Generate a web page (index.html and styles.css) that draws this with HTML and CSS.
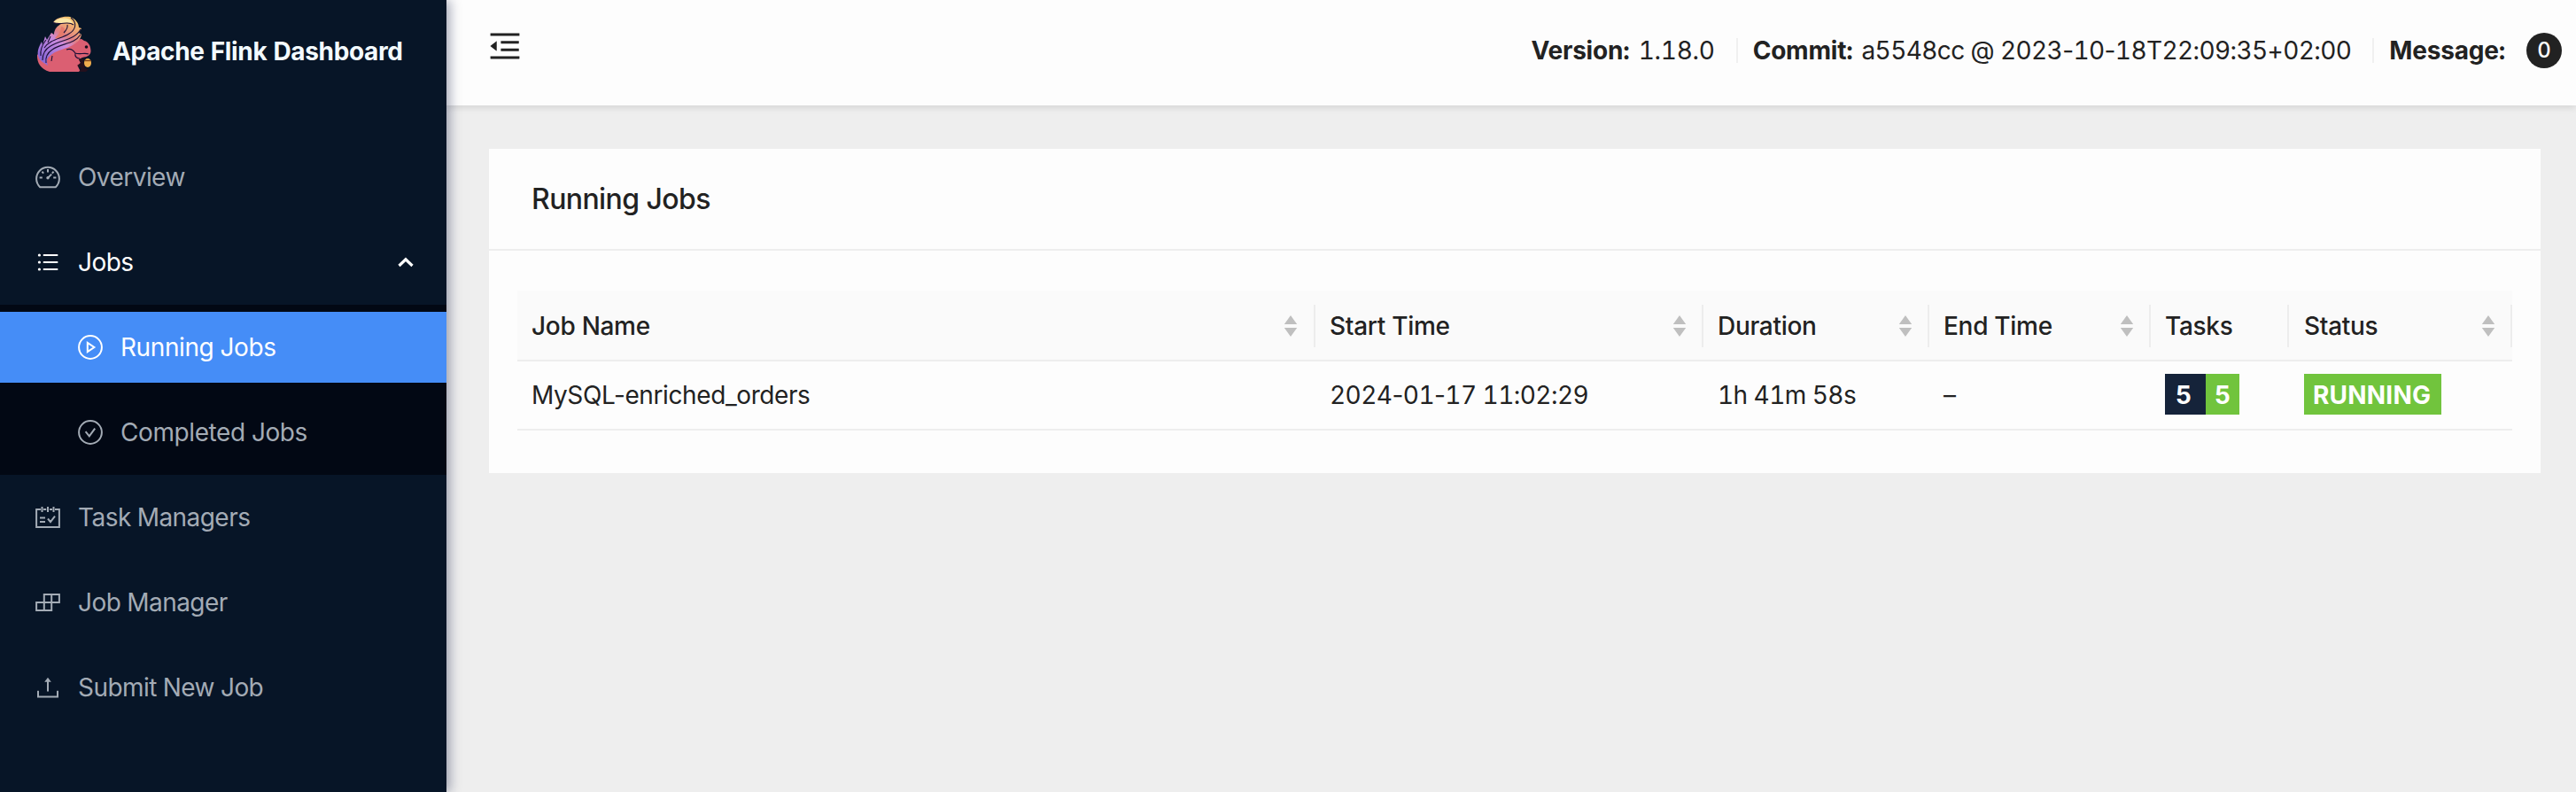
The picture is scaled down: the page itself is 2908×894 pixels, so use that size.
FILE: index.html
```html
<!DOCTYPE html>
<html lang="en">
<head>
<meta charset="utf-8">
<title>Apache Flink Web Dashboard</title>
<link rel="stylesheet" href="styles.css">
</head>
<body>
<div class="layout">
  <aside class="sider">
    <div class="brand">
      <svg class="logo" viewBox="0 0 64 66">
        <defs>
          <linearGradient id="tail" gradientUnits="userSpaceOnUse" x1="42" y1="2" x2="14" y2="50">
            <stop offset="0" stop-color="#f6cf6e"/>
            <stop offset="0.2" stop-color="#efa873"/>
            <stop offset="0.4" stop-color="#e07f84"/>
            <stop offset="0.58" stop-color="#c98ade"/>
            <stop offset="1" stop-color="#8d6ad8"/>
          </linearGradient>
        </defs>
        <path fill="#db5f72" d="M16 64C6 61 1.500 54 2 45L10 38L38 35C43 30 47 27 52 27L55 29C60 30 62.500 35 62.500 41C62 46 58 47 53 48L49 50L51 54L48 58L51 64Z"/>
        <path fill="url(#tail)" d="M8 53C2 49 1 42 5 34L7 30L8 34L11 24L13 28L18 20L21 22C21 16 25 12 29 10L20 8.500C23 3 32 1 39 2C45 4 49 9 49 14L52 15L49 20L52 22C51 28 47 31 42 34C36 38 25 39 19 44C13 48 12 51 14 57Z"/>
        <path fill="#fbe7a6" d="M20 8.500C24 3 33 2.500 39 5L43 10C37 7 28 11 20 8.500Z"/>
        <path fill="#e57a6c" d="M29 13C34 14 35 20 30 25C27 27 24 27 22 26C26 22 29 18 29 13Z"/>
        <g fill="none" stroke="#1d1036" stroke-width="1.100">
          <path d="M20 8.500C29 12 37 6 43 11M40 3C48 9 45 17 38 21C29 27 17 27 10 37"/>
          <path d="M51 16C45 28 28 28 17 35C10 39 8 44 8 51"/>
          <path d="M51 22C43 34 30 31 19 39C13 43 11 48 12 54"/>
          <path d="M12 28C8 33 5 38 6 46M17 24L14 31M36 11C37 15 34 18 32 20M19 46L18 52"/>
          <path d="M35 39C40 37 43 40 45 43C50 45 55 42 60 44M45 43C44 47 47 49 50 49"/>
        </g>
        <path fill="#24101d" d="M49 50L55 48L54 52L57 57L55 60L60 61L57 64L49 64L52 60L47 57L51 54Z"/>
        <circle cx="57.500" cy="36" r="1.800" fill="#1a0d1d"/>
        <ellipse cx="59" cy="54" rx="4" ry="5" fill="#efae4e"/>
        <path stroke="#7a3f1d" stroke-width="1.300" d="M55.300 51.500h7.400"/>
      </svg>
      <h1 class="brand-name">Apache Flink Dashboard</h1>
    </div>
    <nav class="menu">
      <a class="item">
        <svg class="icon" viewBox="0 0 28 28"><path class="line" d="M5.200 25.200A12.900 12.900 0 1 1 22.800 25.200Z"/><path class="line" d="M14 5v3.600M7.400 7.800l1.800 1.800M20.600 7.800l-1.800 1.800M4.600 14.500h3.200M20.200 14.500h3.200M14.200 14.600l4-4"/><circle class="dot" cx="14" cy="14.800" r="1.700"/></svg>
        <span>Overview</span>
      </a>
      <a class="item open">
        <svg class="icon" viewBox="0 0 28 28"><path class="line" d="M8.800 6h16.500M8.800 14h16.500M8.800 22h16.500"/><circle class="dot" cx="4.400" cy="6" r="1.600"/><circle class="dot" cx="4.400" cy="14" r="1.600"/><circle class="dot" cx="4.400" cy="22" r="1.600"/></svg>
        <span>Jobs</span>
        <svg class="arrow" viewBox="0 0 20 20"><path d="M2.500 14l7.500-7.200 7.500 7.200"/></svg>
      </a>
      <div class="submenu">
        <a class="item selected">
          <svg class="icon" viewBox="0 0 28 28"><circle class="line" cx="14" cy="14" r="12.900"/><path class="line" d="M10.800 8.800v10.400l7.600-5.200z"/></svg>
          <span>Running Jobs</span>
        </a>
        <a class="item">
          <svg class="icon" viewBox="0 0 28 28"><circle class="line" cx="14" cy="14" r="12.900"/><path class="line" d="M8.600 13.200l4.200 5.200 6.400-8.800"/></svg>
          <span>Completed Jobs</span>
        </a>
      </div>
      <a class="item">
        <svg class="icon" viewBox="0 0 28 28"><path class="line" d="M6 5H1.100v20h25.800V5H22M9 5h3.200M16 5h3M7.500 2v6M14 2v6M20.500 2v6M5 14.500h6M5 19h6M14 15.500l3 3.600 5-6.400"/></svg>
        <span>Task Managers</span>
      </a>
      <a class="item">
        <svg class="icon" viewBox="0 0 28 28"><path class="line" d="M9.800 5h17.100v9H9.800zM1.100 14h17.100v9H1.100zM18.200 5v9M9.800 14v9"/></svg>
        <span>Job Manager</span>
      </a>
      <a class="item">
        <svg class="icon" viewBox="0 0 28 28"><path class="line" d="M3 17.800v6.700h22v-6.700M14 18.500V5"/><path class="dot" d="M14 2.800l3.800 4.900h-7.600z"/></svg>
        <span>Submit New Job</span>
      </a>
    </nav>
  </aside>
  <div class="main">
    <header class="topbar">
      <svg class="fold" viewBox="0 0 1024 1024"><path d="M408 442h480c4.400 0 8-3.600 8-8v-56c0-4.400-3.600-8-8-8H408c-4.400 0-8 3.600-8 8v56c0 4.400 3.600 8 8 8zm-8 204c0 4.400 3.600 8 8 8h480c4.400 0 8-3.600 8-8v-56c0-4.400-3.600-8-8-8H408c-4.400 0-8 3.600-8 8v56zm504-486H120c-4.400 0-8 3.600-8 8v56c0 4.400 3.600 8 8 8h784c4.400 0 8-3.600 8-8v-56c0-4.400-3.600-8-8-8zm0 632H120c-4.400 0-8 3.600-8 8v56c0 4.400 3.600 8 8 8h784c4.400 0 8-3.600 8-8v-56c0-4.400-3.600-8-8-8zM115.400 518.900L271.700 642c5.800 4.600 14.400.5 14.400-6.900V388.900c0-7.400-8.500-11.500-14.400-6.900L115.400 505.100a8.740 8.740 0 000 13.800z"/></svg>
      <div class="info">
        <span class="pair"><strong>Version:</strong> 1.18.0</span>
        <i class="divider"></i>
        <span class="pair commit"><strong>Commit:</strong> a5548cc @ 2023<span class="dash">-</span>10<span class="dash">-</span>18T22:09:35+02:00</span>
        <i class="divider"></i>
        <strong class="message">Message:</strong>
        <span class="badge">0</span>
      </div>
    </header>
    <main class="content">
      <section class="card">
        <h2 class="card-head">Running Jobs</h2>
        <div class="card-body">
          <div class="row head">
            <div class="cell">Job Name<svg class="sorter" viewBox="0 0 16 26"><path d="M8 1l7.200 10H.8zM8 25l7.200-10H.8z"/></svg></div>
            <div class="cell">Start Time<svg class="sorter" viewBox="0 0 16 26"><path d="M8 1l7.200 10H.8zM8 25l7.200-10H.8z"/></svg></div>
            <div class="cell">Duration<svg class="sorter" viewBox="0 0 16 26"><path d="M8 1l7.200 10H.8zM8 25l7.200-10H.8z"/></svg></div>
            <div class="cell">End Time<svg class="sorter" viewBox="0 0 16 26"><path d="M8 1l7.200 10H.8zM8 25l7.200-10H.8z"/></svg></div>
            <div class="cell">Tasks</div>
            <div class="cell">Status<svg class="sorter" viewBox="0 0 16 26"><path d="M8 1l7.200 10H.8zM8 25l7.200-10H.8z"/></svg></div>
          </div>
          <div class="row">
            <div class="cell name">MySQL-enriched_orders</div>
            <div class="cell time"><span>2024<span class="dash">-</span>01<span class="dash">-</span>17 11:02:29</span></div>
            <div class="cell time">1h 41m 58s</div>
            <div class="cell">–</div>
            <div class="cell"><span class="tag total">5</span><span class="tag running">5</span></div>
            <div class="cell"><span class="tag status">RUNNING</span></div>
          </div>
        </div>
      </section>
    </main>
  </div>
</div>
</body>
</html>
```
FILE: styles.css
```css
* { box-sizing: border-box; }

body {
  margin: 0;
  font-family: Inter, "Liberation Sans", sans-serif;
  font-size: 28px;
  font-variant-numeric: tabular-nums;
  letter-spacing: -0.3px;
  line-height: 44px;
  color: #222;
  background: #eee;
}

.layout { display: flex; height: 894px; overflow: hidden; }

/* Sidebar */
.sider {
  position: relative;
  z-index: 1;
  flex: 0 0 504px;
  background: #071527;
  box-shadow: 4px 0 12px rgba(10, 18, 60, 0.35);
}
.brand { display: flex; height: 128px; padding: 17px 0 0 40px; }
.logo { width: 64px; height: 66px; }
.brand-name {
  margin: 19px 0 0 23px;
  font-size: 28px;
  font-weight: 700;
  line-height: 44px;
  letter-spacing: -0.35px;
  color: #f3faff;
  white-space: nowrap;
}
.menu { display: flex; flex-direction: column; gap: 16px; padding-top: 32px; letter-spacing: -0.55px; }
.item {
  display: flex;
  align-items: center;
  height: 80px;
  padding: 0 32px 0 40px;
  gap: 20px;
  color: #a3abb5;
}
.item.open { color: #fff; }
.submenu {
  display: flex;
  flex-direction: column;
  gap: 16px;
  margin: -8px 0;
  padding: 8px 0;
  background: #020814;
}
.submenu .item { padding-left: 88px; letter-spacing: -0.4px; }
.item.selected { background: #458df7; color: #fff; }
.icon { flex: none; width: 28px; height: 28px; }
.icon .line { fill: none; stroke: currentColor; stroke-width: 2; }
.icon .dot { fill: currentColor; }
.arrow { width: 20px; height: 20px; margin-left: auto; margin-right: 4px; }
.arrow path { fill: none; stroke: #fff; stroke-width: 3.2; }

/* Header */
.main { flex: 1; display: flex; flex-direction: column; min-width: 0; }
.topbar {
  display: flex;
  align-items: flex-start;
  justify-content: space-between;
  height: 119px;
  padding: 0 16px 0 45px;
  background: #fdfdfd;
  box-shadow: 0 2px 8px rgba(0, 0, 0, 0.12);
}
.fold { width: 42px; height: 42px; margin-top: 31px; fill: #222; }
.info { display: flex; align-items: center; height: 44px; margin-top: 35px; white-space: nowrap; }
.info strong { font-weight: 700; letter-spacing: -0.2px; }
.pair strong { margin-right: 3px; }
.commit { letter-spacing: -0.6px; }
.divider { width: 2px; height: 28px; margin: 0 17px 0 24px; background: #f0f0f0; }
.dash { font-variant-numeric: normal; }
.badge {
  width: 40px;
  height: 40px;
  margin-left: 24px;
  border-radius: 20px;
  background: #222;
  color: #fff;
  font-size: 24px;
  font-weight: 500;
  line-height: 40px;
  text-align: center;
}

/* Jobs card */
.content { padding: 49px 40px 0 48px; }
.card { height: 366px; background: #fdfdfd; }
.card-head {
  height: 115px;
  margin: 0;
  padding: 33px 48px 0;
  border-bottom: 2px solid #eee;
  font-size: 32px;
  font-weight: 500;
  line-height: 48px;
  letter-spacing: -0.6px;
}
.card-body { padding: 45px 32px 0; }
.row {
  display: grid;
  grid-template-columns: 901px 438px 255px 250px 156px 1fr;
  height: 78px;
  border-bottom: 2px solid #eee;
}
.head { height: 80px; background: #fafafa; font-weight: 500; }
.cell { display: flex; align-items: center; padding-left: 16px; white-space: nowrap; }
.name { font-variant-numeric: normal; letter-spacing: -0.4px; }
.time { letter-spacing: -0.55px; }
.head .cell {
  justify-content: space-between;
  padding-top: 1px;
  padding-right: 19px;
  background: linear-gradient(#ededed, #ededed) right 16px / 2px 48px no-repeat;
}
.head .cell:first-child { padding-right: 20px; }
.sorter { width: 16px; height: 26px; fill: #bfbfbf; }
.cell:last-child { padding-left: 17px; }
.tag { height: 46px; margin-bottom: 2px; padding: 0 10px; line-height: 48px; font-weight: 700; color: #fff; }
.total { width: 46px; padding-left: 12px; background: #15233a; }
.running { width: 38px; background: #71c43d; }
.status { width: 155px; background: #71c43d; letter-spacing: 0.2px; }
```
